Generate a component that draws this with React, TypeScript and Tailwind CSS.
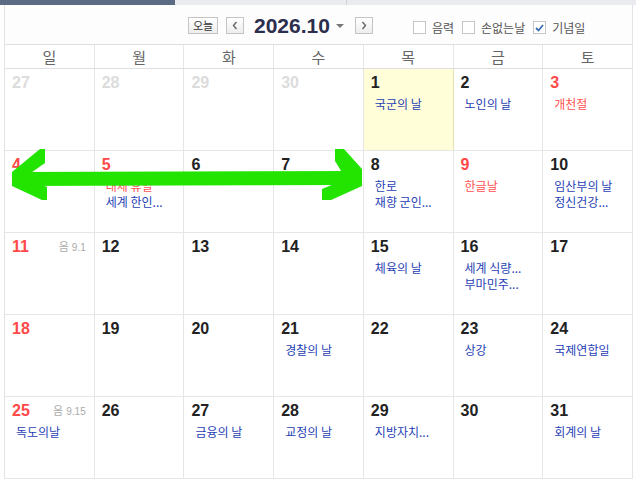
import React from "react";

type Ev = { t: string; red?: boolean };
type Day = {
  n: number;
  other?: boolean;
  red?: boolean;
  today?: boolean;
  lunar?: string;
  ev?: Ev[];
};

const weeks: Day[][] = [
  [
    { n: 27, other: true },
    { n: 28, other: true },
    { n: 29, other: true },
    { n: 30, other: true },
    { n: 1, today: true, ev: [{ t: "국군의 날" }] },
    { n: 2, ev: [{ t: "노인의 날" }] },
    { n: 3, red: true, ev: [{ t: "개천절", red: true }] },
  ],
  [
    { n: 4, red: true },
    { n: 5, red: true, ev: [{ t: "대체 휴일", red: true }, { t: "세계 한인..." }] },
    { n: 6 },
    { n: 7 },
    { n: 8, ev: [{ t: "한로" }, { t: "재향 군인..." }] },
    { n: 9, red: true, ev: [{ t: "한글날", red: true }] },
    { n: 10, ev: [{ t: "임산부의 날" }, { t: "정신건강..." }] },
  ],
  [
    { n: 11, red: true, lunar: "9.1" },
    { n: 12 },
    { n: 13 },
    { n: 14 },
    { n: 15, ev: [{ t: "체육의 날" }] },
    { n: 16, ev: [{ t: "세계 식량..." }, { t: "부마민주..." }] },
    { n: 17 },
  ],
  [
    { n: 18, red: true },
    { n: 19 },
    { n: 20 },
    { n: 21, ev: [{ t: "경찰의 날" }] },
    { n: 22 },
    { n: 23, ev: [{ t: "상강" }] },
    { n: 24, ev: [{ t: "국제연합일" }] },
  ],
  [
    { n: 25, red: true, lunar: "9.15", ev: [{ t: "독도의날" }] },
    { n: 26 },
    { n: 27, ev: [{ t: "금융의 날" }] },
    { n: 28, ev: [{ t: "교정의 날" }] },
    { n: 29, ev: [{ t: "지방자치..." }] },
    { n: 30 },
    { n: 31, ev: [{ t: "회계의 날" }] },
  ],
];

const dayNames = ["일", "월", "화", "수", "목", "금", "토"];

function Checkbox({ checked }: { checked?: boolean }) {
  return (
    <span className="w-[13px] h-[13px] border border-[#c6c6c6] bg-white flex items-center justify-center">
      {checked && (
        <svg width="9" height="8" viewBox="0 0 9 8">
          <path d="M1 4 L3.5 6.5 L8 1" fill="none" stroke="#3a6fb0" strokeWidth="1.8" />
        </svg>
      )}
    </span>
  );
}

function NavBtn({ dir }: { dir: "l" | "r" }) {
  return (
    <span className="w-[18px] h-[17px] border border-[#c4c4c4] bg-gradient-to-b from-white to-[#ededed] flex items-center justify-center">
      <svg width="6" height="9" viewBox="0 0 6 9">
        <path
          d={dir === "l" ? "M4.5 1 L1.5 4.5 L4.5 8" : "M1.5 1 L4.5 4.5 L1.5 8"}
          fill="none"
          stroke="#666"
          strokeWidth="1.4"
        />
      </svg>
    </span>
  );
}

function Cell({ d }: { d: Day }) {
  const numColor = d.other
    ? "text-[#dcdcdc]"
    : d.red
    ? "text-[#ff4848]"
    : "text-[#222222]";
  return (
    <div
      className={
        "h-full border-r flex flex-col " +
        (d.today ? "bg-[#fffed9] border-[#e5e1b3]" : "border-[#e6e6e6]")
      }
    >
      <div className="flex items-center justify-between pl-[7px] pr-[8px] pt-[6px] h-[22px]">
        <span
          className={
            "font-['Liberation_Sans',Arial,sans-serif] font-bold text-[16px] leading-[16px] " +
            numColor
          }
        >
          {d.n}
        </span>
        {d.lunar && (
          <span className="flex items-baseline gap-[3px] text-[#aaaaaa]">
            <span className="font-['Noto_Sans_CJK_KR',sans-serif] text-[11px] leading-[12px]">음</span>
            <span className="font-['Liberation_Sans',Arial,sans-serif] text-[10px] leading-[12px]">
              {d.lunar}
            </span>
          </span>
        )}
      </div>
      <div className="pl-[11px] pt-[5px] flex flex-col">
        {d.ev?.map((e, i) => (
          <span
            key={i}
            className={
              "font-['Noto_Sans_CJK_KR',sans-serif] text-[12px] leading-[16px] whitespace-nowrap " +
              (e.red ? "text-[#ff5252]" : "text-[#1f3fb5]")
            }
          >
            {e.t}
          </span>
        ))}
      </div>
    </div>
  );
}

export default function App() {
  return (
    <div className="w-[636px] h-[484px] bg-white relative overflow-hidden">
      <div className="flex h-[5px]">
        <div className="w-[175px] bg-[#5b6b84]" />
        <div className="w-[172px] bg-[#e9ebee] border-r border-[#cfd3d8]" />
        <div className="flex-1 bg-[#e9ebee]" />
      </div>
      <div className="ml-[4px] w-[629px] border-l border-[#e3e3e3]">
        <div className="h-[39px] border-r border-[#e3e3e3] bg-[#fdfdfd] flex items-center pt-[2px]">
          <span className="ml-[183px] w-[30px] h-[17px] border border-[#c4c4c4] bg-gradient-to-b from-white to-[#ededed] flex items-center justify-center font-['Noto_Sans_CJK_KR',sans-serif] text-[11px] leading-none text-[#333]">
            오늘
          </span>
          <span className="ml-[8px]">
            <NavBtn dir="l" />
          </span>
          <span className="ml-[10px] font-['Liberation_Sans',Arial,sans-serif] font-bold text-[21px] leading-none text-[#2c2e4d] tracking-[0px]">
            2026.10
          </span>
          <span className="ml-[6px] w-0 h-0 border-l-[4px] border-r-[4px] border-t-[4px] border-l-transparent border-r-transparent border-t-[#777]" />
          <span className="ml-[11px]">
            <NavBtn dir="r" />
          </span>
          <span className="ml-[40px] flex items-center gap-[6px] mt-[4px]">
            <Checkbox />
            <span className="font-['Noto_Sans_CJK_KR',sans-serif] text-[12px] leading-none text-[#555]">음력</span>
          </span>
          <span className="ml-[8px] flex items-center gap-[6px] mt-[4px]">
            <Checkbox />
            <span className="font-['Noto_Sans_CJK_KR',sans-serif] text-[12px] leading-none text-[#555]">손없는날</span>
          </span>
          <span className="ml-[8px] flex items-center gap-[6px] mt-[4px]">
            <Checkbox checked />
            <span className="font-['Noto_Sans_CJK_KR',sans-serif] text-[12px] leading-none text-[#555]">기념일</span>
          </span>
        </div>
        <div className="grid grid-cols-7 h-[25px] border-t border-b border-[#dedede]">
          {dayNames.map((n) => (
            <div
              key={n}
              className="border-r border-[#e6e6e6] flex items-center justify-center font-['Noto_Sans_CJK_KR',sans-serif] text-[15px] leading-none text-[#666]"
            >
              {n}
            </div>
          ))}
        </div>
        {weeks.map((w, i) => (
          <div key={i} className="grid grid-cols-7 h-[82px] border-b border-[#e6e6e6]">
            {w.map((d, j) => (
              <Cell key={j} d={d} />
            ))}
          </div>
        ))}
      </div>
      <svg
        className="absolute left-0 top-0 pointer-events-none"
        width="636"
        height="484"
        viewBox="0 0 636 484"
      >
        <g fill="#22e400">
          <polygon points="12,172 361,171 361,185 12,186" />
          <polygon points="40,149 45,149 45,163 25,177 47,187 47,200 42,200 12,186 12,172" />
          <polygon points="335,149 344,149 362,169 362,186 331,200 322,200 322,189 346,179 335,161" />
        </g>
      </svg>
    </div>
  );
}
